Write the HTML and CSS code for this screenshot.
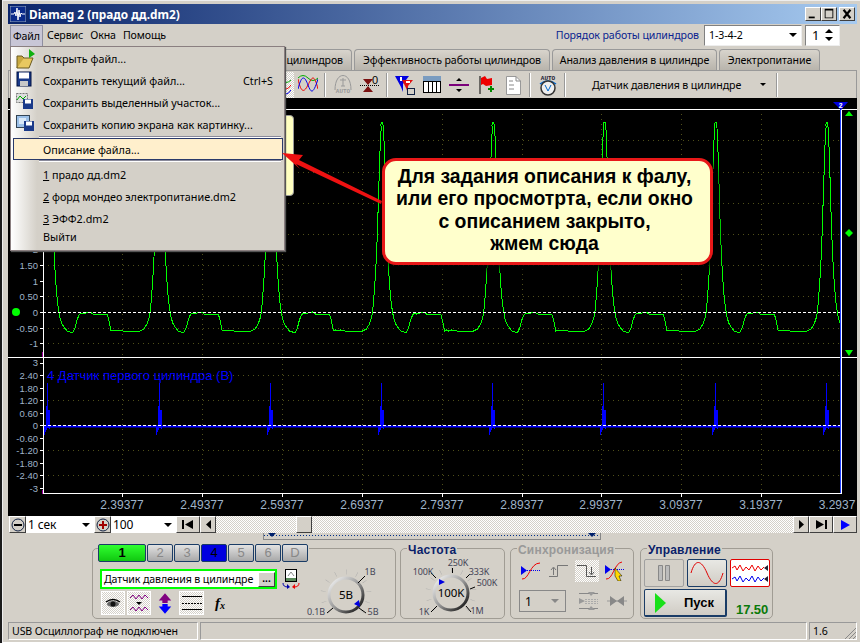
FILE: index.html
```html
<!DOCTYPE html>
<html lang="ru">
<head>
    <meta charset="UTF-8">
    <title>Diamag 2</title>
    <link rel="stylesheet" href="styles.css">
</head>
<body>
<div class="window">
    <div class="titlebar">
        <svg class="app-icon" viewBox="0 0 16 16"><rect width="16" height="16" fill="#0a2a8a" stroke="#9ab" /><path d="M1 8H4L5 6L6 10L7 2L8 14L9 4L10 11L11 7L12 8H15" fill="none" stroke="#fff" /></svg>
        <span class="title-text">Diamag 2 (прадо дд.dm2)</span>
        <div class="win-buttons">
            <button class="win-btn"><svg viewBox="0 0 16 14"><path d="M3 10H10V12H3Z" /></svg></button>
            <button class="win-btn"><svg viewBox="0 0 16 14"><path d="M3 1H13V12H3ZM4 3V11H12V3Z" fill-rule="evenodd" /></svg></button>
            <button class="win-btn win-close"><svg viewBox="0 0 16 14"><path d="M4 2L12 12M12 2L4 12" stroke="#000" stroke-width="2.5" /></svg></button>
        </div>
    </div>

    <div class="menubar">
        <span class="menu-item active">Файл</span>
        <span class="menu-item">Сервис</span>
        <span class="menu-item">Окна</span>
        <span class="menu-item">Помощь</span>
        <span class="order-label">Порядок работы цилиндров</span>
        <div class="combo order-combo">1-3-4-2<i class="arrow"></i></div>
        <div class="spinner">1<span class="spin-arrows"><i class="arrow up"></i><i class="arrow"></i></span></div>
    </div>

    <div class="tabs">
        <div class="tab tab-first">цилиндров</div>
        <div class="tab tab-eff">Эффективность работы цилиндров</div>
        <div class="tab tab-press">Анализ давления в цилиндре</div>
        <div class="tab tab-power">Электропитание</div>
    </div>

    <div class="toolbar">
        <div class="tb-btn checked">
            <svg width="20" height="20" viewBox="0 0 20 20" fill="none"><path d="M0 5Q5 0 10 5T20 5" stroke="#0a0" /><path d="M0 10Q5 2 10 10T20 10" stroke="#e00" /><path d="M0 15Q5 7 10 15T20 15" stroke="#00e" /></svg>
        </div>
        <div class="tb-btn">
            <svg width="20" height="20" viewBox="0 0 20 20" fill="none"><path d="M0 3Q5 -2 10 3T20 3" stroke="#0a0" /><path d="M0 4C3 18 6 18 10 10S16 -2 20 14" stroke="#e00" /><path d="M0 14C4 -2 7 2 10 10S15 20 20 4" stroke="#00e" /></svg>
        </div>
        <i class="tb-sep"></i>
        <div class="tb-btn">
            <svg width="20" height="20" viewBox="0 0 20 20" fill="none" stroke="#999"><path d="M2 15C2 5 6 0.5 10 0.5S18 5 18 15" /><path d="M10 3V11M7 5H13M8 11H12" /><text x="10" y="18" class="tiny-label" fill="#999" stroke="none">AUTO</text></svg>
        </div>
        <div class="tb-btn">
            <svg width="20" height="20" viewBox="0 0 20 20"><text x="15" y="9" class="zero-label">0</text><path d="M0 10.5H20" stroke="#000" stroke-dasharray="1 1" /><path d="M3 4H13L8 10Z M3 17H13L8 11Z" fill="#7a1010" /></svg>
        </div>
        <i class="tb-sep"></i>
        <div class="tb-btn">
            <svg width="20" height="20" viewBox="0 0 20 20"><path d="M0 1H14L8 9V17L6 12Z" fill="#0000e0" /><path d="M7 5H18L13 11V18L11 13Z" fill="#e01010" /><path d="M5 2H7V6H5Z M11 6H15V8H11Z" fill="#fff" /><rect x="12.5" y="13.5" width="7" height="6" fill="#d4d0c8" stroke="#124" /></svg>
        </div>
        <div class="tb-btn">
            <svg width="20" height="20" viewBox="0 0 20 20"><rect x="1.5" y="1.5" width="17" height="16" fill="#fff" stroke="#000" /><rect x="1" y="1" width="18" height="5" fill="#7a9cc0" /><path d="M6.5 6V18M10.5 6V18M14.5 6V18M1 6.5H19" stroke="#000" /></svg>
        </div>
        <div class="tb-btn">
            <svg width="20" height="20" viewBox="0 0 20 20"><path d="M0 9H20V11H0Z" fill="#7a007a" /><path d="M7 6L10 3L13 6ZM7 14H13L10 17Z" /></svg>
        </div>
        <div class="tb-btn">
            <svg width="20" height="20" viewBox="0 0 20 20"><path d="M4 1V19" stroke="#000" /><path d="M5 3L9 1L11 4L16 3V10L10 11L7 9L5 10Z" fill="#e00" /><path d="M12 14H18M15 11V17" stroke="#080" stroke-width="2" /></svg>
        </div>
        <div class="tb-btn">
            <svg width="20" height="20" viewBox="0 0 20 20" fill="none"><path d="M3.5 1.5H13L17.5 6V19.5H3.5Z" fill="#fff" stroke="#999" /><path d="M13 1.5V6H17.5M6 6H10M6 10H11M6 14H11" stroke="#888" /></svg>
        </div>
        <i class="tb-sep"></i>
        <div class="tb-btn">
            <svg width="20" height="22" viewBox="0 0 20 22" fill="none"><text x="10" y="6" class="tiny-label" fill="#223">AUTO</text><path d="M2 10Q10 4 18 10" stroke="#06c" stroke-width="1.5" /><circle cx="10" cy="14" r="7" stroke="#333" stroke-width="1.5" fill="#eee" /><path d="M7 11L10 17L13 11" stroke="#06c" /></svg>
        </div>
        <i class="tb-sep"></i>
        <div class="tb-select">Датчик давления в цилиндре<i class="arrow"></i></div>
        <i class="tb-sep"></i>
    </div>

    <div class="scope">
        <svg class="plot" viewBox="8 98 849 418">
            <defs>
                <polyline id="period-a" fill="none" stroke="#00ff00" shape-rendering="crispEdges" points="-1,126 0,122 1,122 2,130 3,157 4,190 5,225 6,250 7,270 8,285 9,297 10,306 11,312 12,318 14,324 16,327 19,331 22,332 25,332 27,328 29,320 31,315 33,313 35,314 38,313 42,312 45,314 52,314 59,314 60,317 61,321 62,326 63,331 65,330 67,331 70,330 75,331 85,331 92,331 96,329 99,324 101,318 102,313 103,303 104,290 105,275 106,257 107,232 108,200 109,170 110,140 111,126" />
                <g id="pulse" stroke="#0000ff" fill="none" shape-rendering="crispEdges">
                    <path d="M0 383V428" />
                    <path d="M-1 406V430M1 410V428M2 410V429" />
                    <path d="M-3 425V435M-2 426V432" />
                </g>
                <clipPath id="upper-clip"><rect x="43" y="110" width="798" height="247" /></clipPath>
                <clipPath id="lower-clip"><rect x="43" y="358" width="798" height="135" /></clipPath>
            </defs>

            <path class="grid" d="M122.5 109V493M202.5 109V493M282.5 109V493M362.5 109V493M442.5 109V493M522.5 109V493M601.5 109V493M681.5 109V493M761.5 109V493" />
            <path class="grid" d="M43 140.5H841M43 172.5H841M43 203.5H841M43 234.5H841M43 265.5H841M43 296.5H841M43 328.5H841M43 343.5H841M43 375.5H841M43 400.5H841M43 450.5H841M43 475.5H841" />

            <g clip-path="url(#upper-clip)">
                <use href="#period-a" x="-63.2" />
                <use href="#period-a" x="48" />
                <use href="#period-a" x="159.2" />
                <use href="#period-a" x="270.4" />
                <use href="#period-a" x="381.6" />
                <use href="#period-a" x="492.8" />
                <use href="#period-a" x="604" />
                <use href="#period-a" x="715.2" />
                <use href="#period-a" x="826.4" />
            </g>
            <path class="zero" d="M43 312.5H841" />

            <g clip-path="url(#lower-clip)">
                <path d="M43 426.5H841" stroke="#0000ff" stroke-width="2" />
                <use href="#pulse" x="47" />
                <use href="#pulse" x="159" />
                <use href="#pulse" x="270" />
                <use href="#pulse" x="381" />
                <use href="#pulse" x="492" />
                <use href="#pulse" x="603" />
                <use href="#pulse" x="715" />
                <use href="#pulse" x="826" />
            </g>
            <path class="zero" d="M43 425.5H841" />
            <text x="47" y="380" class="trace-name">4 Датчик первого цилиндра (В)</text>

            <path d="M43.5 109V493M8 357.5H857M8 109.5H857M43 493.5H842" stroke="#fff" fill="none" />
            <path d="M40 250.5H43M40 265.5H43M40 281.5H43M40 296.5H43M40 312.5H43M40 328.5H43M40 343.5H43M40 363.5H43M40 375.5H43M40 388.5H43M40 400.5H43M40 413.5H43M40 425.5H43M40 438.5H43M40 450.5H43M40 463.5H43M40 475.5H43M40 488.5H43" stroke="#fff" />
            <path d="M122.5 493V497M202.5 493V497M282.5 493V497M362.5 493V497M442.5 493V497M522.5 493V497M601.5 493V497M681.5 493V497M761.5 493V497" stroke="#fff" />
            <path d="M42.5 352V357M42.5 490V494" stroke="#a000a0" />

            <g class="axis-y">
                <text x="38" y="253">2</text>
                <text x="38" y="269">1.50</text>
                <text x="38" y="285">1</text>
                <text x="38" y="300">0.50</text>
                <text x="38" y="316">0</text>
                <text x="38" y="332">-0.50</text>
                <text x="38" y="347">-1</text>
                <text x="38" y="366">3</text>
                <text x="38" y="379">2.40</text>
                <text x="38" y="392">1.80</text>
                <text x="38" y="404">1.20</text>
                <text x="38" y="417">0.60</text>
                <text x="38" y="429">0</text>
                <text x="38" y="442">-0.60</text>
                <text x="38" y="454">-1.20</text>
                <text x="38" y="467">-1.80</text>
                <text x="38" y="479">-2.40</text>
                <text x="38" y="492">-3</text>
            </g>
            <g class="axis-x">
                <text x="122" y="509">2.39377</text>
                <text x="202" y="509">2.49377</text>
                <text x="282" y="509">2.59377</text>
                <text x="362" y="509">2.69377</text>
                <text x="442" y="509">2.79377</text>
                <text x="522" y="509">2.89377</text>
                <text x="601" y="509">2.99377</text>
                <text x="681" y="509">3.09377</text>
                <text x="761" y="509">3.19377</text>
                <text x="837" y="509">3.2937</text>
            </g>

            <circle cx="16" cy="312" r="4" fill="#00ff00" />
            <path d="M845 116H853L849 111ZM845 350H853L849 356ZM849 229L853 233L849 237L845 233Z" fill="#00ff00" />
            <path d="M841.5 109V493" stroke="#fff" />
            <path d="M840.5 109V493" stroke="#2040ff" />
            <path d="M833 102H848L841 110Z" fill="#0000e0" />
            <text x="840.5" y="107.5" class="cursor-num">2</text>
        </svg>
    </div>

    <div class="controls">
        <button class="nav-btn round-btn"><svg width="14" height="14" viewBox="0 0 14 14"><circle cx="7" cy="7" r="6" fill="#d4d0c8" stroke="#124" /><path d="M3 7H11" stroke="#000" stroke-width="2" /></svg></button>
        <div class="combo scale-combo">1 сек<i class="arrow"></i></div>
        <button class="nav-btn round-btn"><svg width="14" height="14" viewBox="0 0 14 14"><circle cx="7" cy="7" r="6" fill="#d4d0c8" stroke="#124" /><path d="M3 7H11M7 3V11" stroke="#a00000" stroke-width="2" /></svg></button>
        <div class="combo count-combo">100<i class="arrow"></i></div>
        <button class="nav-btn first-btn"><svg width="12" height="9" viewBox="0 0 12 9"><path d="M0 0H2V9H0ZM11 0V9L3 4.5Z" /></svg></button>
        <button class="nav-btn step-btn"><svg width="5" height="9" viewBox="0 0 5 9"><path d="M5 0V9L0 4.5Z" /></svg></button>
        <div class="track"><div class="thumb"></div></div>
        <button class="nav-btn step-btn"><svg width="5" height="9" viewBox="0 0 5 9"><path d="M0 0V9L5 4.5Z" /></svg></button>
        <button class="nav-btn first-btn"><svg width="12" height="9" viewBox="0 0 12 9"><path d="M12 0H10V9H12ZM1 0V9L9 4.5Z" /></svg></button>
        <button class="nav-btn first-btn"><svg width="10" height="10" viewBox="0 0 10 10"><path d="M1 0V10L10 5Z" fill="#0000ff" /></svg></button>
    </div>

    <div class="panel">
        <div class="range-bar"><i class="range-mark"></i><i class="range-mark"></i></div>
        <div class="groups">
            <div class="group group-channels">
                <div class="channels-left">
                    <div class="chan-row">
                        <span class="chan chan-green">1</span>
                        <span class="chan">2</span>
                        <span class="chan">3</span>
                        <span class="chan chan-blue">4</span>
                        <span class="chan">5</span>
                        <span class="chan">6</span>
                        <span class="chan">D</span>
                    </div>
                    <div class="sensor-row">
                        <div class="sensor-field">Датчик давления в цилиндре<button class="dots-btn">...</button></div>
                        <svg width="18" height="20" viewBox="0 0 18 20" fill="none"><rect x="3.5" y="0.5" width="11" height="12" fill="#fff" stroke="#000" /><path d="M4 9H14V12H4Z" fill="#5a8a5a" /><path d="M6 7L9 3L12 7" stroke="#888" /><path d="M1 14Q1 18 6 18" stroke="#00a" /><path d="M17 14Q17 18 12 18" stroke="#e00" /><path d="M5 15V20L8 18Z" fill="#00a" /><path d="M13 15V20L10 18Z" fill="#e00" /></svg>
                    </div>
                    <div class="tool-row">
                        <span class="tool checked"><svg width="16" height="12" viewBox="0 0 16 12"><ellipse cx="8" cy="7" rx="6" ry="3" fill="#666" /><ellipse cx="8" cy="7" rx="2.5" ry="2.5" fill="#111" /><path d="M1 5Q8 0 15 5" stroke="#000" stroke-width="1.5" fill="none" /></svg></span>
                        <span class="tool checked"><svg width="20" height="20" viewBox="0 0 20 20" fill="none" stroke="#800080"><path d="M1 5L4 2L7 6L10 2L13 6L16 2L19 5" /><path d="M1 17L4 14L7 18L10 14L13 18L16 14L19 17" /><path d="M7 9H13L10 12Z" fill="#000" stroke="none" /></svg></span>
                        <span class="tool plain"><svg width="16" height="21" viewBox="0 0 18 23"><path d="M9 0L16 8H12V11H6V8H2Z" fill="#800080" /><path d="M9 23L16 15H12V12H6V15H2Z" fill="#0000ff" /></svg></span>
                        <span class="tool checked wide"><svg width="20" height="16" viewBox="0 0 20 16"><path d="M0 1.5H20M0 14.5H20" stroke="#000" /><path d="M0 8.5H20" stroke="#000" stroke-dasharray="2 1" /></svg></span>
                        <span class="tool plain fx">f<sub>x</sub></span>
                    </div>
                </div>
                <svg class="gauge gauge-volt" width="90" height="68" viewBox="303 550 90 68">
                    <defs>
                        <linearGradient id="ring" x1="0" y1="0" x2="1" y2="1"><stop offset="0.1" stop-color="#e8e8e8" /><stop offset="0.5" stop-color="#999" /><stop offset="0.9" stop-color="#222" /></linearGradient>
                    </defs>
                    <circle cx="346" cy="595" r="23" class="gauge-ticks" pathLength="360" transform="rotate(135 346 595)" />
                    <circle cx="346" cy="595" r="17" class="gauge-ring" />
                    <path d="M358 583L365 576M333 608L327 613M359 608L366 613" stroke="#000" />
                    <path d="M354 604L359 600L360 607Z" fill="#0000e0" />
                    <text x="346" y="599" class="gauge-value">5В</text>
                    <g class="gauge-labels">
                        <text x="370" y="575">1В</text>
                        <text x="316" y="615">0.1В</text>
                        <text x="373" y="615">5В</text>
                    </g>
                </svg>
            </div>

            <div class="group group-freq">
                <div class="group-title">Частота</div>
                <svg class="gauge" width="103" height="62" viewBox="401 556 103 62">
                    <circle cx="451" cy="593" r="23" class="gauge-ticks" pathLength="360" transform="rotate(135 451 593)" />
                    <circle cx="451" cy="593" r="17" class="gauge-ring" />
                    <path d="M436 578L431 573M452.5 568V573M466 578L470 574M475 587L470 589M437 606L431 612M466 606L471 612" stroke="#000" />
                    <path d="M439 579V585L445 582Z" fill="#0000e0" />
                    <text x="451" y="597" class="gauge-value">100K</text>
                    <g class="gauge-labels">
                        <text x="458" y="566">250K</text>
                        <text x="423" y="575">100K</text>
                        <text x="479" y="575">333K</text>
                        <text x="487" y="586">500K</text>
                        <text x="424" y="615">1K</text>
                        <text x="477" y="614">1M</text>
                    </g>
                </svg>
            </div>

            <div class="group group-sync">
                <div class="group-title muted">Синхронизация</div>
                <div class="sync-row">
                    <span class="sync-icon"><svg width="20" height="18" viewBox="0 0 20 18" fill="none"><path d="M1 17C8 18 9 1 19 1" stroke="#e00" /><path d="M4 8.5H19" stroke="#00e" stroke-dasharray="1 1" /><path d="M0 4V13L6 8.5Z" fill="#00e" /></svg></span>
                    <span class="sync-icon"><svg width="20" height="14" viewBox="0 0 20 14" fill="none" stroke="#777"><path d="M0 12.5H8.5V1.5H19" /><path d="M4.5 11V4M2 6L4.5 3L7 6" /></svg></span>
                    <span class="sync-icon checked"><svg width="20" height="14" viewBox="0 0 20 14" fill="none" stroke="#555"><path d="M0 1.5H9.5V12.5H19" /><path d="M14.5 3V10M12 8L14.5 11L17 8" /></svg></span>
                    <span class="sync-icon"><svg width="20" height="20" viewBox="0 0 20 20" fill="none"><path d="M1 18C8 19 9 2 17 1" stroke="#e00" /><path d="M4 8.5H19" stroke="#00e" stroke-dasharray="1 1" /><path d="M0 4V13L6 8.5Z" fill="#00e" /><path d="M10 7L17 15L14 15L16 20L13 20L10 15Z" fill="#ffd800" stroke="#000" stroke-width="0.5" /></svg></span>
                </div>
                <div class="sync-row second">
                    <div class="sync-combo">1<i class="arrow grey"></i></div>
                    <svg class="sync-wide" width="20" height="18" viewBox="0 0 20 18"><path d="M0 1.5H19M0 16.5H19" stroke="#888" /><path d="M0 6L6 9L0 12Z M9 0H16L12 4Z M9 18H16L12 14Z" fill="#999" /><path d="M6 7.5H19M6 9.5H19M6 11.5H19" stroke="#aaa" stroke-dasharray="2 1" /></svg>
                    <svg class="sync-last" width="20" height="10" viewBox="0 0 20 10"><path d="M0 5H20" stroke="#999" /><path d="M3 0L10 5L3 10Z M17 0L10 5L17 10Z" fill="#888" /></svg>
                </div>
            </div>

            <div class="group group-run">
                <div class="group-title">Управление</div>
                <div class="run-row">
                    <button class="run-btn pause-btn"><svg width="14" height="18" viewBox="0 0 14 18"><path d="M1.5 1.5H5.5V16.5H1.5ZM8.5 1.5H12.5V16.5H8.5Z" fill="#bbb" stroke="#888" /></svg></button>
                    <button class="run-btn sine-btn"><svg width="34" height="22" viewBox="0 0 34 22"><path d="M1 11C5 -3 11 -3 17 11S29 25 33 11" fill="none" stroke="#e00000" /></svg></button>
                    <button class="run-btn noise-btn"><svg width="36" height="22" viewBox="0 0 36 22" fill="none"><path d="M0 6L3 4L5 8L8 3L11 9L14 5L17 8L20 3L23 9L26 4L29 8L32 5" stroke="#e00" /><path d="M0 17L3 15L5 19L8 14L11 20L14 16L17 19L20 14L23 20L26 15L29 19L32 16" stroke="#00e" /><path d="M36 3V9L32 6ZM36 14V20L32 17Z" fill="#223" /></svg></button>
                </div>
                <div class="run-row second">
                    <button class="run-btn start-btn"><svg width="12" height="20" viewBox="0 0 12 20"><path d="M0 0L11 10L0 20Z" fill="#19e019" /></svg><span>Пуск</span></button>
                    <span class="freq-value">17.50</span>
                </div>
            </div>
        </div>
    </div>

    <div class="statusbar">
        <div class="status-cell status-main">USB Осциллограф не подключен</div>
        <div class="status-cell status-fill"></div>
        <div class="status-cell status-ver">1.6<svg class="grip" width="12" height="12" viewBox="0 0 12 12"><path d="M1 12L12 1M5 12L12 5M9 12L12 9" stroke="#888" /></svg></div>
    </div>

    <!-- open menu and the annotation lie over the scope -->
    <div class="note-behind"></div>
    <div class="file-menu">
        <div class="file-item"><svg class="file-icon" width="20" height="20" viewBox="0 0 20 20"><path d="M1 19L4 9H17L13 19Z" fill="#e8c860" stroke="#6a5a20" /><path d="M1 19V7H6L8 9" fill="#c8a840" stroke="#6a5a20" /><path d="M13 0L19 5L13 9Z" fill="#10b010" /></svg>Открыть файл...</div>
        <div class="file-item"><svg class="file-icon" width="16" height="16" viewBox="0 0 16 16"><rect x="1" y="1" width="14" height="14" fill="#1a3a8a" stroke="#001040" /><rect x="3" y="1.5" width="10" height="6" fill="#fff" /><rect x="4" y="10" width="8" height="5" fill="#c8c8c8" /></svg>Сохранить текущий файл...<span class="shortcut">Ctrl+S</span></div>
        <div class="file-item"><svg class="file-icon" width="18" height="16" viewBox="0 0 18 16"><rect x="0.5" y="0.5" width="11" height="9" fill="#ddd" stroke="#777" stroke-dasharray="2 1" /><path d="M1 7L4 3L7 6L10 3" stroke="#0a0" fill="none" /><rect x="7" y="6" width="10" height="10" fill="#1a3a8a" /><rect x="9" y="6.5" width="6" height="4" fill="#fff" /></svg>Сохранить выделенный участок...</div>
        <div class="file-item"><svg class="file-icon" width="18" height="16" viewBox="0 0 18 16"><rect x="0.5" y="0.5" width="13" height="12" fill="#9cc0e8" stroke="#345" /><rect x="3" y="3" width="7" height="6" fill="#d8e8f8" /><rect x="8" y="6" width="10" height="10" fill="#1a3a8a" /><rect x="10" y="6.5" width="6" height="4" fill="#fff" /></svg>Сохранить копию экрана как картинку...</div>
        <hr class="file-sep">
        <div class="file-item selected">Описание файла...</div>
        <hr class="file-sep after">
        <div class="file-item"><span><u>1</u> прадо дд.dm2</span></div>
        <div class="file-item"><span><u>2</u> форд мондео электропитание.dm2</span></div>
        <div class="file-item"><span><u>3</u> ЭФФ2.dm2</span></div>
        <div class="file-item last">Выйти</div>
    </div>
    <svg class="red-arrow" width="110" height="60" viewBox="278 150 110 60"><path d="M282 153L303 155L299 160L382 201L381 204L296 164L300 169Z" fill="#ee1111" /></svg>
    <div class="callout">Для задания описания к фалу,<br>или его просмотрта, если окно<br>с описанием закрыто,<br>жмем сюда</div>
</div>
</body>
</html>
```

FILE: styles.css
```css
* {
    box-sizing: border-box;
}

body {
    margin: 0;
    width: 860px;
    height: 643px;
    overflow: hidden;
    background: #1c1c1c;
    font-family: "Noto Sans", "Liberation Sans", sans-serif;
    font-size: 10.6px;
    letter-spacing: -0.1px;
    color: #000;
}

button {
    font-family: inherit;
    padding: 0;
    margin: 0;
}

svg {
    display: block;
}

.window {
    position: relative;
    margin-left: 2px;
    width: 858px;
    height: 643px;
    padding: 4px 3px 3px 5px;
    background: #d4d0c8;
    border-top: 1px solid #eee;
    border-bottom: 1px solid #fff;
    border-left: 1px solid #eee;
    display: flex;
    flex-direction: column;
}

/* arrows used by combos */
.arrow {
    display: inline-block;
    width: 0;
    height: 0;
    border-left: 4px solid transparent;
    border-right: 4px solid transparent;
    border-top: 4px solid #000;
}

.arrow.up {
    border-top: 0;
    border-bottom: 4px solid #000;
}

.arrow.grey {
    border-top-color: #888;
}

/* title */
.titlebar {
    height: 20px;
    margin-top: -1px;
    display: flex;
    align-items: center;
    padding-left: 2px;
    background: linear-gradient(to right, #0a246a, #a6caf0);
    flex: none;
}

.app-icon {
    width: 16px;
    height: 16px;
}

.title-text {
    margin-left: 3px;
    color: #fff;
    font-weight: bold;
    font-size: 11.8px;
    letter-spacing: 0;
}

.win-buttons {
    margin-left: auto;
    margin-right: 2px;
    display: flex;
}

.win-btn {
    width: 16px;
    height: 14px;
    background: #d4d0c8;
    border: 1px solid;
    border-color: #fff #404040 #404040 #fff;
}

.win-btn svg {
    width: 14px;
    height: 12px;
}

.win-close {
    margin-left: 2px;
}

/* menu bar */
.menubar {
    height: 22px;
    display: flex;
    align-items: center;
    flex: none;
    padding-left: 2px;
}

.menu-item {
    padding: 0 3px;
    margin-right: 1px;
    height: 21px;
    line-height: 20px;
}

.menu-item.active {
    background: #c8c6d6;
    border: 1px solid #8f8fa0;
    border-bottom: 0;
    padding: 0 2px;
}

.order-label {
    margin-left: auto;
    color: #0a1f8f;
    margin-right: 5px;
}

.combo {
    background: #fff;
    display: flex;
    align-items: center;
    justify-content: space-between;
}

.order-combo {
    width: 98px;
    height: 21px;
    padding: 0 4px;
    border: 1px solid #999;
    border-color: #808080 #eee #eee #808080;
}

.spinner {
    width: 35px;
    height: 21px;
    margin-left: 3px;
    margin-right: 17px;
    background: #fff;
    border: 1px solid;
    border-color: #808080 #eee #eee #808080;
    display: flex;
    align-items: center;
    padding-left: 6px;
    font-size: 13px;
}

.spin-arrows {
    margin-left: auto;
    margin-right: 6px;
    display: flex;
    flex-direction: column;
    gap: 4px;
}

.spin-arrows .arrow {
    display: block;
}

/* tabs */
.tabs {
    height: 21px;
    margin-top: 3px;
    display: flex;
    gap: 2px;
    flex: none;
    padding-left: 2px;
}

.tab {
    height: 21px;
    border: 1px solid #999;
    border-bottom: 0;
    border-radius: 4px 4px 0 0;
    background: linear-gradient(#d8d4cc, #b8b4ac);
    line-height: 20px;
    text-align: center;
    white-space: nowrap;
}

.tab-first {
    width: 342px;
    text-align: right;
    padding-right: 8px;
}

.tab-eff {
    width: 196px;
}

.tab-press {
    width: 165px;
}

.tab-power {
    width: 101px;
}

/* toolbar */
.toolbar {
    height: 28px;
    flex: none;
    display: flex;
    align-items: center;
    padding-left: 258px;
    border-top: 1px solid #999;
    border-left: 1px solid #999;
    border-right: 1px solid #999;
}

.tb-btn {
    width: 27px;
    height: 26px;
    flex: none;
    display: flex;
    align-items: center;
    justify-content: center;
}

.tb-btn.checked {
    background: repeating-conic-gradient(#fff 0 25%, #d4d0c8 0 50%) 0 0 / 2px 2px;
}

.tb-sep {
    width: 2px;
    height: 24px;
    margin: 0 3px;
    flex: none;
    background: linear-gradient(to right, #999 50%, #fff 50%);
}

.tiny-label {
    font: bold 6px "Liberation Mono", monospace;
    text-anchor: middle;
    letter-spacing: 0;
}

.zero-label {
    font: 11px "Liberation Sans", sans-serif;
    text-anchor: middle;
}

.tb-select {
    width: 204px;
    padding-left: 23px;
    display: flex;
    align-items: center;
    white-space: nowrap;
}

.tb-select .arrow {
    margin-left: 19px;
    border-left-width: 3px;
    border-right-width: 3px;
    border-top-width: 3px;
}

/* scope */
.scope {
    height: 418px;
    flex: none;
    background: #000;
}

.plot {
    width: 849px;
    height: 418px;
    letter-spacing: 0;
}

.grid {
    fill: none;
    stroke: #50501a;
    stroke-dasharray: 1 4;
}

.zero {
    fill: none;
    stroke: #fff;
    stroke-dasharray: 3 2;
}

.trace-name {
    font: 13px "Liberation Sans", sans-serif;
    fill: #0000ff;
}

.axis-y text {
    font: 9.5px "Liberation Sans", sans-serif;
    fill: #9fb3c8;
    text-anchor: end;
}

.axis-x text {
    font: 12px "Liberation Sans", sans-serif;
    fill: #9fb3c8;
    text-anchor: middle;
}

.cursor-num {
    font: bold 7px "Liberation Mono", monospace;
    fill: #fff;
    text-anchor: middle;
}

/* slider row */
.controls {
    height: 17px;
    flex: none;
    display: flex;
    padding-left: 1px;
}

.nav-btn {
    height: 17px;
    flex: none;
    background: #d4d0c8;
    border: 1px solid;
    border-color: #fff #404040 #404040 #fff;
    display: flex;
    align-items: center;
    justify-content: center;
}

.round-btn {
    width: 17px;
}

.first-btn {
    width: 24px;
}

.step-btn {
    width: 16px;
}

.scale-combo {
    width: 68px;
    padding: 0 4px 0 2px;
    font-size: 12px;
}

.count-combo {
    width: 65px;
    padding: 0 4px 0 2px;
    font-size: 12px;
}

.track {
    flex: 1;
    background: repeating-conic-gradient(#fff 0 25%, #d4d0c8 0 50%) 0 0 / 2px 2px;
    display: flex;
    padding-left: 80px;
}

.thumb {
    width: 16px;
    height: 17px;
    background: #d4d0c8;
    border: 1px solid;
    border-color: #fff #404040 #404040 #fff;
}

/* bottom panel */
.panel {
    height: 88px;
    flex: none;
}

.range-bar {
    width: 338px;
    height: 7px;
    margin-left: 255px;
    border: 1px solid #888;
    border-top: 0;
    background: linear-gradient(to right, #00308a 50%, transparent 50%) 0 2px / 3px 1px repeat-x;
    display: flex;
    justify-content: space-between;
    padding: 0 4px;
}

.range-mark {
    width: 0;
    height: 0;
    border-left: 4px solid transparent;
    border-right: 4px solid transparent;
    border-top: 4px solid #00206a;
}

.groups {
    margin-top: 8px;
    margin-left: 84px;
    display: flex;
}

.group {
    height: 71px;
    flex: none;
    border: 1px solid #a09c94;
    border-radius: 5px;
}

.group-title {
    height: 12px;
    margin-top: -5px;
    margin-left: 6px;
    padding: 0 1px;
    width: max-content;
    background: #d4d0c8;
    color: #0a1f6a;
    font: bold 12px/12px "Liberation Sans", sans-serif;
    letter-spacing: 0.2px;
}

.group-title.muted {
    color: #999;
}

.group-channels {
    width: 304px;
    display: flex;
}

.channels-left {
    width: 210px;
    flex: none;
}

.gauge-volt {
    flex: none;
    align-self: flex-end;
}

.chan-row {
    margin-top: -5px;
    margin-left: 5px;
    display: flex;
    gap: 1px;
    width: 211px;
    background: #d4d0c8;
    position: relative;
    z-index: 1;
}

.chan {
    width: 26px;
    height: 18px;
    flex: none;
    border: 1px solid #1a3c66;
    border-radius: 2px;
    background: linear-gradient(#e2e2e2, #a8a8a8);
    color: #888;
    text-align: center;
    font: 13px/16px "Liberation Sans", sans-serif;
}

.chan-green {
    width: 48px;
    background: linear-gradient(#30ff30, #10c810);
    color: #000;
    font-weight: bold;
}

.chan-blue {
    background: #0000e0;
    color: #000;
}

.sensor-row {
    margin-top: 7px;
    margin-left: 7px;
    display: flex;
    align-items: center;
    gap: 5px;
}

.sensor-field {
    width: 177px;
    height: 20px;
    flex: none;
    border: 2px solid #00ff00;
    background: #fff;
    display: flex;
    align-items: center;
    justify-content: space-between;
    padding-left: 2px;
    white-space: nowrap;
}

.dots-btn {
    width: 17px;
    height: 15px;
    background: #d4d0c8;
    border: 1px solid;
    border-color: #fff #404040 #404040 #fff;
    font: bold 10px/8px "Liberation Sans", sans-serif;
}

.tool-row {
    margin-top: 2px;
    margin-left: 8px;
    display: flex;
    gap: 2px;
}

.tool {
    width: 24px;
    height: 24px;
    flex: none;
    display: flex;
    align-items: center;
    justify-content: center;
}

.tool.checked {
    background: repeating-conic-gradient(#fff 0 25%, #d4d0c8 0 50%) 0 0 / 2px 2px;
    border: 1px solid #fff;
}

.tool.plain {
    margin-left: 3px;
    width: 18px;
}

.tool.wide {
    margin-left: 3px;
    width: 25px;
}

.tool.fx {
    margin-left: 5px;
    font: italic bold 15px "Liberation Serif", serif;
}

.tool.fx sub {
    font-size: 10px;
    margin-top: 4px;
}

.gauge-ticks {
    fill: none;
    stroke: #aaa;
    stroke-width: 5;
    stroke-dasharray: 1 26 1 26 1 26 1 26 1 26 1 26 1 26 1 26 1 26 1 26 1 89;
}

.gauge-ring {
    fill: #d4d0c8;
    stroke: url(#ring);
    stroke-width: 3;
}

.gauge-value {
    font: 11.5px "Noto Sans", "Liberation Sans", sans-serif;
    text-anchor: middle;
}

.gauge-labels text {
    font: 9px "Noto Sans", "Liberation Sans", sans-serif;
    fill: #454556;
    text-anchor: middle;
}

.group-freq {
    width: 105px;
    margin-left: 4px;
}

.group-sync {
    width: 124px;
    margin-left: 5px;
}

.sync-row {
    margin-top: 4px;
    height: 22px;
    display: flex;
    align-items: center;
    padding-left: 8px;
}

.sync-row.second {
    margin-top: 8px;
    padding-left: 8px;
}

.sync-icon {
    width: 24px;
    height: 22px;
    margin-right: 4px;
    flex: none;
    display: flex;
    align-items: center;
    justify-content: center;
}

.sync-icon.checked {
    background: repeating-conic-gradient(#fff 0 25%, #d4d0c8 0 50%) 0 0 / 2px 2px;
}

.sync-combo {
    width: 47px;
    height: 22px;
    border: 1px solid #888;
    display: flex;
    align-items: center;
    justify-content: space-between;
    padding: 0 6px 0 5px;
    font-size: 12px;
}

.sync-wide {
    margin-left: 13px;
}

.sync-last {
    margin-left: 8px;
}

.group-run {
    width: 133px;
    margin-left: 6px;
}

.run-row {
    margin-top: 3px;
    margin-left: 3px;
    display: flex;
    gap: 3px;
}

.run-row.second {
    margin-top: 2px;
}

.run-btn {
    width: 40px;
    height: 28px;
    flex: none;
    border: 1px solid #1a3c66;
    border-radius: 2px;
    background: linear-gradient(#e8e8e4, #d0ccc4);
    display: flex;
    align-items: center;
    justify-content: center;
}

.pause-btn {
    border-color: #a0a0a0;
    background: #d4d0c8;
}

.noise-btn {
    border: 1px solid #e00000;
    background: #fff;
}

.start-btn {
    width: 83px;
    justify-content: flex-start;
    padding-left: 10px;
    border-width: 1px 2px 2px 1px;
    font: bold 13px "Liberation Sans", sans-serif;
}

.start-btn span {
    margin-left: 17px;
}

.freq-value {
    margin-left: 6px;
    align-self: flex-end;
    color: #0a7a0a;
    font: bold 13px "Liberation Sans", sans-serif;
}

/* status bar */
.statusbar {
    margin-top: 1px;
    height: 18px;
    flex: none;
    display: flex;
    gap: 2px;
}

.status-cell {
    height: 18px;
    border: 1px solid;
    border-color: #999 #fff #fff #999;
    line-height: 16px;
    padding-left: 3px;
    white-space: nowrap;
}

.status-main {
    width: 190px;
}

.status-fill {
    flex: 1;
}

.status-ver {
    width: 48px;
    position: relative;
}

.grip {
    position: absolute;
    right: 0;
    bottom: 0;
}

/* overlays */
.note-behind {
    position: absolute;
    left: 276px;
    top: 114px;
    width: 15px;
    height: 81px;
    background: #ffffc0;
    border: 1px solid #999;
    border-radius: 4px;
}

.file-menu {
    position: absolute;
    left: 7px;
    top: 45px;
    width: 275px;
    height: 205px;
    padding: 0 1px;
    background: linear-gradient(to right, #fff 0, #d4d0c8 26px);
    border: 1px solid #8a7f80;
    box-shadow: 1px 1px 1px #555;
    font-size: 10.8px;
    letter-spacing: 0;
}

.file-item {
    height: 22px;
    display: flex;
    align-items: center;
    padding-left: 31px;
    position: relative;
    white-space: nowrap;
}

.file-item.last {
    height: 18px;
    margin-top: -2px;
}

.file-item.selected {
    margin: 0 0 0 1px;
    padding-left: 29px;
    background: #ffefcc;
    border: 1px solid #2a3a6a;
}

.file-icon {
    position: absolute;
    left: 4px;
    top: 2px;
}

.shortcut {
    position: absolute;
    right: 10px;
}

.file-sep {
    margin: 1px 2px 0 27px;
    height: 2px;
    border: 0;
    border-top: 1px solid #8a8a9a;
    border-bottom: 1px solid #fff;
}

.file-sep.after {
    margin-top: 0;
    margin-bottom: 1px;
}

.red-arrow {
    position: absolute;
    left: 275px;
    top: 149px;
}

.callout {
    position: absolute;
    left: 379px;
    top: 157px;
    width: 331px;
    height: 107px;
    padding: 4px 6px 0 0;
    border: 3px solid #e81818;
    border-radius: 14px;
    background: #ffffcc;
    box-shadow: 4px 4px 8px #000;
    text-align: center;
    letter-spacing: 0;
    font: bold 19.4px/22.4px "Liberation Sans", sans-serif;
}
```
